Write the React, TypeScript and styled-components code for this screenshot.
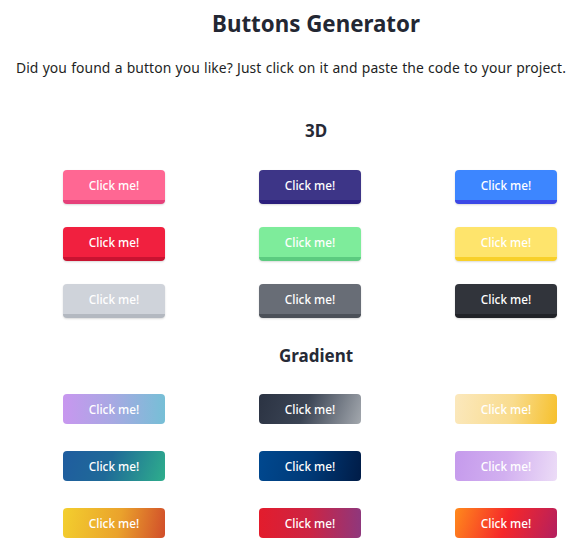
import React from "react";
import styled, { createGlobalStyle, css } from "styled-components";

const Global = createGlobalStyle`
  html, body { margin: 0; padding: 0; background: #ffffff; }
  body { overflow: hidden; font-family: "Noto Sans", "Open Sans", sans-serif; color: #262a36; }
`;

const Page = styled.main`
  width: 582px;
  padding-top: 8px;
  display: flex;
  flex-direction: column;
`;

const Title = styled.h1`
  margin: 0;
  padding-left: 50px;
  text-align: center;
  font-size: 22.3px;
  line-height: 32px;
  font-weight: 700;
  color: #232733;
`;

const Subtitle = styled.p`
  margin: 18px 0 0;
  text-align: center;
  font-size: 13.9px;
  letter-spacing: 0.08px;
  word-spacing: 0.5px;
  line-height: 20px;
  color: #1e1f24;
  white-space: nowrap;
`;

const SectionTitle = styled.h2<{ $top: number }>`
  margin: ${(p) => p.$top}px 0 0;
  padding-left: 50px;
  text-align: center;
  font-size: 17px;
  line-height: 24px;
  font-weight: 700;
  color: #262a36;
`;

const Grid = styled.div<{ $top: number; $rowGap: number }>`
  margin-top: ${(p) => p.$top}px;
  padding-left: 16px;
  display: grid;
  grid-template-columns: repeat(3, 196px);
  row-gap: ${(p) => p.$rowGap}px;
  justify-items: center;
`;

const Button = styled.button<{ $bg: string; $edge?: string; $text?: string }>`
  width: 102px;
  height: 30px;
  padding: 0;
  border: none;
  border-radius: 4px;
  font-family: "Noto Sans", "Open Sans", sans-serif;
  font-size: 11.8px;
  font-weight: 500;
  color: ${(p) => p.$text || "#ffffff"};
  background: ${(p) => p.$bg};
  cursor: pointer;
  ${(p) =>
    p.$edge &&
    css`
      height: 34px;
      border-bottom: 4px solid ${p.$edge};
      box-shadow: 0 1px 2px rgba(0, 0, 0, 0.15);
    `}
`;

const threeD = [
  { bg: "#ff6793", edge: "#e6407a" },
  { bg: "#3d3587", edge: "#2b1e7c" },
  { bg: "#3d86ff", edge: "#3b48e6" },
  { bg: "#f1203f", edge: "#c81331" },
  { bg: "#7eec9b", edge: "#5ccb80" },
  { bg: "#fee46c", edge: "#f8d02a" },
  { bg: "#cfd3da", edge: "#b3b8c0" },
  { bg: "#686d76", edge: "#4b5058" },
  { bg: "#31343b", edge: "#202227" },
];

const gradients = [
  "linear-gradient(90deg, #c897ef 0%, #a6a9e2 50%, #76bfd6 100%)",
  "linear-gradient(110deg, #2b3343 0%, #3b4454 45%, #a3a8ae 100%)",
  "linear-gradient(100deg, #fbe8bd 0%, #f9dc8e 55%, #f6c02c 100%)",
  "linear-gradient(110deg, #1f5c9f 0%, #1f6a98 45%, #2eae8c 100%)",
  "linear-gradient(100deg, #00488f 0%, #003a78 50%, #001c47 100%)",
  "linear-gradient(100deg, #c59aec 0%, #d2b0f0 50%, #ecdcf7 100%)",
  "linear-gradient(100deg, #f3cf2e 0%, #eaa22c 55%, #d14d2a 100%)",
  "linear-gradient(90deg, #e31c2c 0%, #cc2444 50%, #8f377c 100%)",
  "linear-gradient(110deg, #ff8a1c 0%, #f5272a 50%, #b31f5f 100%)",
];

export default function App() {
  return (
    <Page>
      <Global />
      <Title>Buttons Generator</Title>
      <Subtitle>Did you found a button you like? Just click on it and paste the code to your project.</Subtitle>

      <SectionTitle $top={41}>3D</SectionTitle>
      <Grid $top={27} $rowGap={23}>
        {threeD.map((b, i) => (
          <Button key={i} $bg={b.bg} $edge={b.edge}>
            Click me!
          </Button>
        ))}
      </Grid>

      <SectionTitle $top={26}>Gradient</SectionTitle>
      <Grid $top={26} $rowGap={27}>
        {gradients.map((g, i) => (
          <Button key={i} $bg={g}>
            Click me!
          </Button>
        ))}
      </Grid>
    </Page>
  );
}
